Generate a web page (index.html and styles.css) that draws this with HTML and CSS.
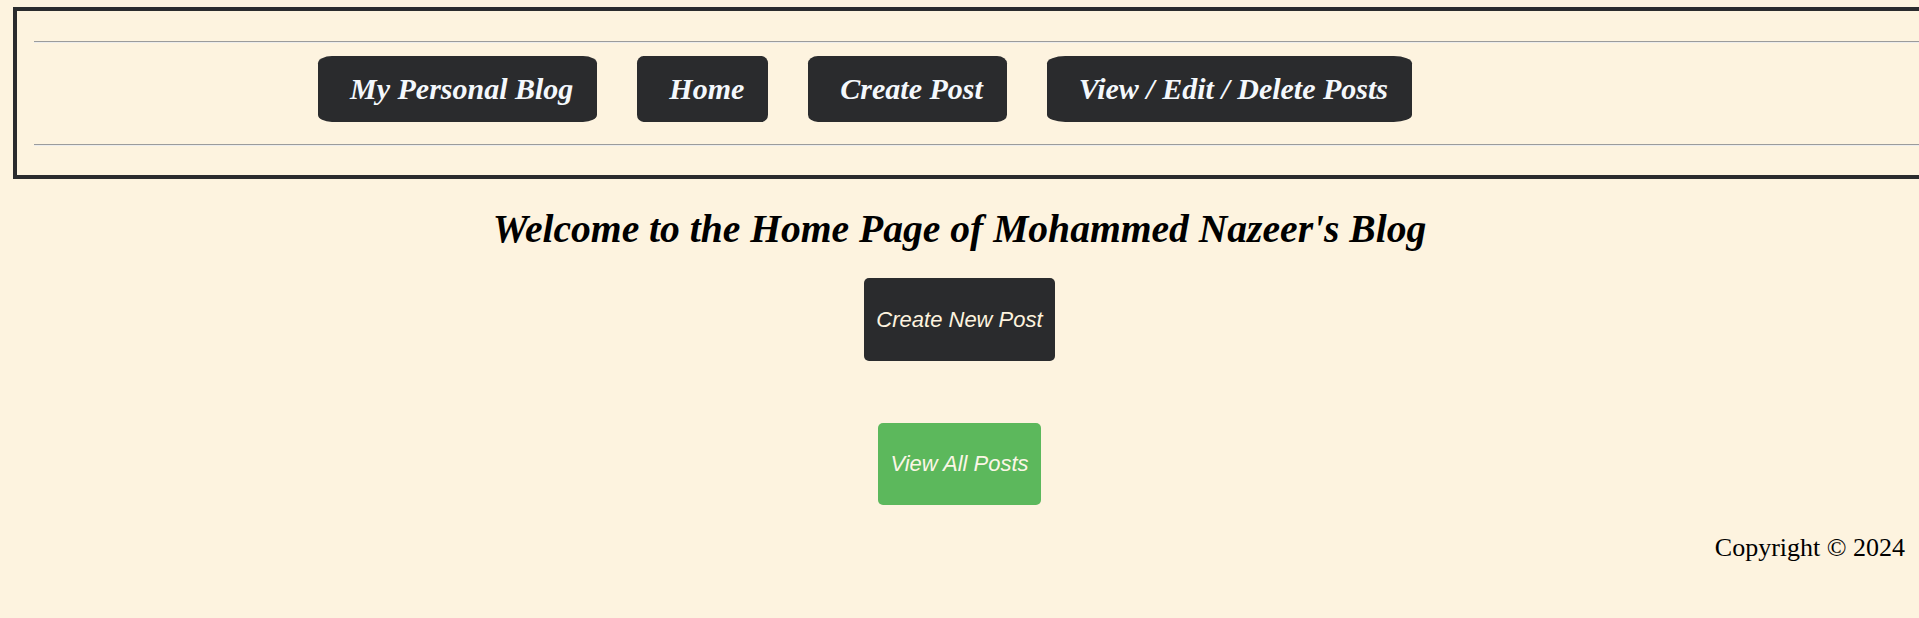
FILE: index.html
```html
<!DOCTYPE html>
<html lang="en">
<head>
<meta charset="utf-8">
<title>Mohammed Nazeer's Blog</title>
<link rel="stylesheet" href="styles.css">
</head>
<body>
<header class="topbar">
  <hr class="rule">
  <nav class="nav">
    <a class="nav-btn" href="#">My Personal Blog</a>
    <a class="nav-btn" href="#">Home</a>
    <a class="nav-btn" href="#">Create Post</a>
    <a class="nav-btn" href="#">View / Edit / Delete Posts</a>
  </nav>
  <hr class="rule">
</header>
<main class="main">
  <h1 class="title">Welcome to the Home Page of Mohammed Nazeer's Blog</h1>
  <a class="action action-dark" href="#">Create New Post</a>
  <a class="action action-green" href="#">View All Posts</a>
</main>
<footer class="footer">Copyright © 2024</footer>
</body>
</html>
```

FILE: styles.css
```css
html {
  overflow-x: hidden;
}

body {
  margin: 0;
  background: #fdf3df;
  font-family: "Liberation Serif", "Times New Roman", serif;
  color: #000;
  overflow-x: hidden;
}

.topbar {
  margin: 7px 0 0 13px;
  border: 4px solid #2a2b2d;
  width: calc(100% + 40px);
  padding: 30px 0 29px 17px;
}

.rule {
  margin: 0;
  border: 0;
  border-top: 1px solid #9b9b9b;
  border-bottom: 1px solid #ececec;
  height: 0;
}

.nav {
  display: flex;
  gap: 40px;
  margin: 13px 0 22px;
  padding-left: 284px;
}

.nav-btn {
  display: flex;
  align-items: center;
  height: 66px;
  padding: 0 24px 0 32px;
  background: #2a2b2d;
  color: #f4f8fc;
  border-radius: 5% / 11%;
  font-family: "Liberation Serif", "Times New Roman", serif;
  font-weight: bold;
  font-style: italic;
  font-size: 30px;
  text-decoration: none;
  white-space: nowrap;
}

.main {
  display: flex;
  flex-direction: column;
  align-items: center;
}

.title {
  margin: 27px 0 26px;
  font-size: 39.6px;
  font-weight: bold;
  font-style: italic;
  line-height: normal;
}

.action {
  display: flex;
  align-items: center;
  justify-content: center;
  height: 83px;
  padding: 0 12px;
  border-radius: 5px;
  font-family: "Liberation Sans", Arial, sans-serif;
  font-style: italic;
  font-size: 22px;
  color: #fdf3df;
  text-decoration: none;
}

.action-dark {
  background: #2a2b2d;
  margin-bottom: 62px;
}

.action-green {
  background: #5cb85c;
  height: 82px;
  color: #fbf6e6;
}

.footer {
  margin-top: 28px;
  text-align: right;
  padding-right: 14px;
  font-size: 26px;
  line-height: normal;
}
```
